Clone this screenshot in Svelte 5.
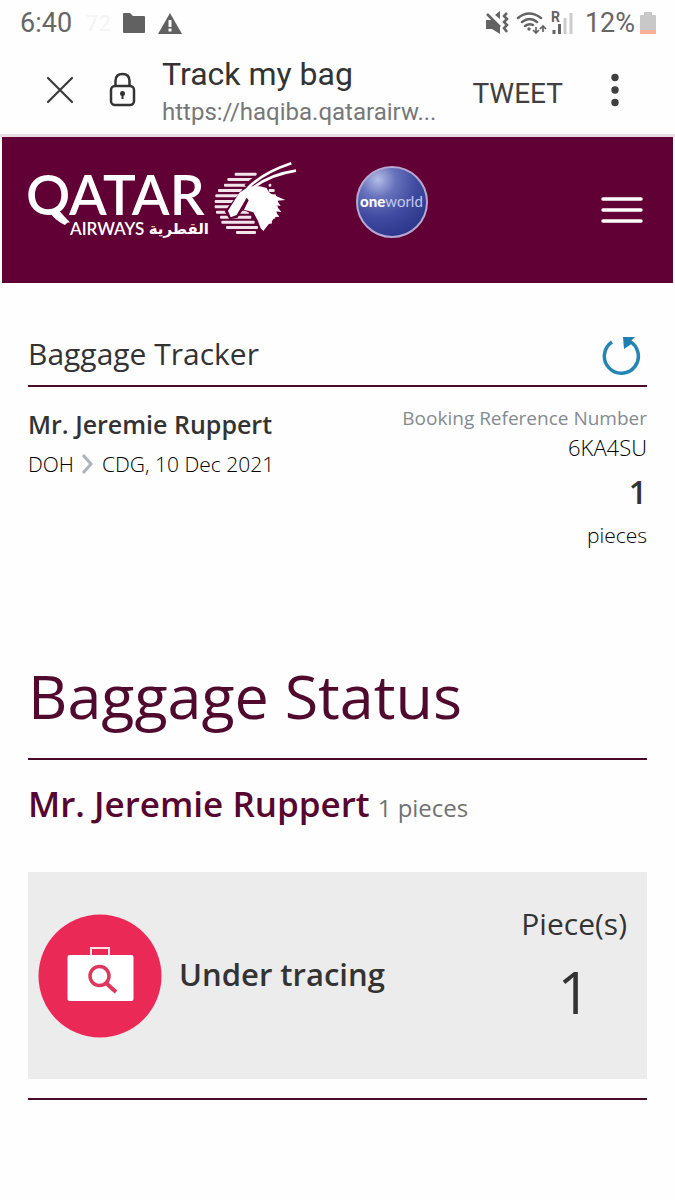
<script>
  const passenger = 'Mr. Jeremie Ruppert';
  const reference = '6KA4SU';
  const pieces = 1;
  const stripes = [
    [80, 44, 66], [58, 60, 84], [48, 77, 84], [30, 93, 86], [22, 109, 72], [20, 126, 60],
    [20, 142, 50], [24, 158, 100], [36, 173, 94], [40, 188, 100], [54, 204, 96], [84, 219, 60],
    [182, 77, 8], [182, 93, 18], [184, 109, 20], [190, 126, 20], [192, 142, 17], [190, 158, 16], [184, 173, 18], [178, 188, 14]
  ];
</script>

<div class="screen">
  <div class="status">
    <span class="time">6:40</span>
    <span class="ghost">72</span>
    <svg class="folder" width="24" height="20" viewBox="0 0 24 20" aria-hidden="true">
      <path d="M2 0h6l3 3h11q1 0 1 1v15q0 1-1 1H2q-1 0-1-1V1q0-1 1-1z" fill="#616161" />
    </svg>
    <svg class="alert" width="24" height="21" viewBox="0 0 24 21" aria-hidden="true">
      <path d="M12 0l12 21H0z" fill="#616161" />
      <path d="M12 7v7M12 15.500v3" stroke="#fff" stroke-width="3" />
    </svg>
    <svg class="signals" width="88" height="26" viewBox="485 9 88 26" aria-hidden="true">
      <path d="M486 19h6l8 6v8l-8-5h-6zM495 14l5-4v8z" fill="#636363" />
      <path d="M487 13l13 13" stroke="#636363" stroke-width="2.500" />
      <path d="M507 12l-3 3 3 3-3 3 3 3-3 3 3 4" fill="none" stroke="#636363" stroke-width="2.500" />
      <g fill="none" stroke="#636363" stroke-width="2.500" stroke-linecap="round">
        <path d="M518 17q11-9 23 0M522 21q8-6 15 0M525 25q4-3 8-1" />
      </g>
      <circle cx="529" cy="28" r="1.700" fill="#636363" />
      <path d="M536 26v6m-3-3l3 3 3-3M543 31v-6m-3 3l3-3 3 3" fill="none" stroke="#636363" stroke-width="1.700" />
      <text x="551" y="21" class="roam">R</text>
      <path d="M554 29v4M559.500 23v10" stroke="#636363" stroke-width="3" />
      <path d="M565 17v16M571 12v21" stroke="#ccc" stroke-width="3" />
    </svg>
    <span class="percent">12%</span>
    <svg width="16" height="24" viewBox="0 0 16 24" aria-hidden="true">
      <path d="M4 1h8v3h3q1 0 1 1v18H0V5q0-1 1-1h3z" fill="#c8c8c8" />
      <path d="M0 19h16v4H0z" fill="#ffae96" />
    </svg>
  </div>

  <div class="browser">
    <button class="close" aria-label="Close">
      <svg width="30" height="30" viewBox="0 0 30 30"><path d="M3 3l24 24M27 3L3 27" stroke="#3a3a3a" stroke-width="2.200" stroke-linecap="round" /></svg>
    </button>
    <svg class="lock" width="28" height="36" viewBox="0 0 28 36" aria-hidden="true">
      <rect x="3" y="14" width="23" height="19" rx="4" fill="none" stroke="#333" stroke-width="2.500" />
      <path d="M7.500 14V9q0-7 7-7t7 7v5" fill="none" stroke="#333" stroke-width="2.500" />
      <circle cx="14.500" cy="21.500" r="2.500" fill="#333" />
      <path d="M14.500 21v6" stroke="#333" stroke-width="2" />
    </svg>
    <div class="address">
      <div class="title">Track my bag</div>
      <div class="url">https://haqiba.qatarairw...</div>
    </div>
    <button class="tweet">TWEET</button>
    <button class="more" aria-label="More options">
      <svg width="10" height="34" viewBox="0 0 10 34"><g fill="#3f3f3f"><circle cx="5" cy="4.500" r="3.700" /><circle cx="5" cy="17" r="3.700" /><circle cx="5" cy="29.500" r="3.700" /></g></svg>
    </button>
  </div>

  <header>
    <svg class="qatar" width="270" height="80" viewBox="27 160 270 80" role="img" aria-label="Qatar Airways">
      <text x="26" y="215" class="brand">QATAR</text>
      <path d="M50 213q6 8 15 12l4-4q-7-2-11-8z" fill="#fff" />
      <text x="70" y="235" class="airways">AIRWAYS</text>
      <text x="209" y="234" class="arabic">القطرية</text>
      <svg x="208" y="158" width="92" height="82" viewBox="0 0 276 246">
        {#each stripes as [x, y, w]}
          <rect {x} {y} width={w} height="9" rx="3" fill="#f3e4ec" />
        {/each}
        <path d="M118 90Q170 40 262 18" fill="none" stroke="#610035" stroke-width="26" />
        <path d="M108 88L50 160l14 24 24-4 30-44-6 22 34 18 20 40 40-70-24-44z" fill="#610035" />
        <path d="M122 86L94 104 60 158l8 20 18-7 30-52 6 8-14 28 28 8 14 26 8 22 8 8 16-20 12-12 6-10 14-1-12-16 18 2-16-20 14 2-10-16 24-2-28-12q-22-6-28-24-16-6-34-6z" fill="#fff" />
        <path d="M116 94Q160 46 250 16M132 92Q184 50 264 38" fill="none" stroke="#fff" stroke-width="8" />
      </svg>
    </svg>
    <svg class="oneworld" width="74" height="74" viewBox="0 0 74 74" role="img" aria-label="oneworld">
      <defs>
        <radialGradient id="globe" cx="30%" cy="18%" r="85%">
          <stop offset="0" stop-color="#b4bde7" />
          <stop offset=".3" stop-color="#6672bb" />
          <stop offset=".65" stop-color="#3f4aa0" />
          <stop offset="1" stop-color="#2c388c" />
        </radialGradient>
      </defs>
      <circle cx="37" cy="37" r="35" fill="url(#globe)" stroke="#b9a7d2" stroke-width="2" />
      <text x="5" y="42" class="world"><tspan class="one">one</tspan>world</text>
    </svg>
    <button class="menu" aria-label="Menu">
      <svg width="42" height="28" viewBox="0 0 42 28"><path d="M2 3h38M2 14h38M2 25h38" stroke="#fff" stroke-width="3.500" stroke-linecap="round" /></svg>
    </button>
  </header>

  <main>
    <div class="heading">
      <h1>Baggage Tracker</h1>
      <button aria-label="Refresh">
        <svg width="42" height="42" viewBox="0 0 42 42">
          <path d="M13 7a17 17 0 1 0 17-1" fill="none" stroke="#2585b5" stroke-width="3.500" />
          <path d="M24 2h12l-4 4 2 2-9 6z" fill="#1e7fb0" />
        </svg>
      </button>
    </div>

    <section class="trip">
      <div>
        <h2>{passenger}</h2>
        <p class="route">
          DOH
          <svg width="14" height="22" viewBox="0 0 14 22" aria-label="to"><path d="M2 2l8 9-8 9" fill="none" stroke="#adb3b8" stroke-width="3" /></svg>
          CDG, 10 Dec 2021
        </p>
      </div>
      <div class="booking">
        <p class="label">Booking Reference Number</p>
        <p class="code">{reference}</p>
        <p class="count">{pieces}</p>
        <p class="unit">pieces</p>
      </div>
    </section>

    <h2 class="section-title">Baggage Status</h2>
    <p class="owner"><strong>{passenger}</strong><span>{pieces} pieces</span></p>

    <section class="card">
      <svg width="124" height="124" viewBox="0 0 124 124" aria-hidden="true">
        <circle cx="62" cy="62" r="61.500" fill="#ea2956" />
        <path d="M53 43V34h18v9" fill="none" stroke="#ffe0e7" stroke-width="2" />
        <rect x="29.500" y="41" width="66" height="46" rx="2" fill="#fff" />
        <circle cx="61.500" cy="62" r="9.500" fill="none" stroke="#df365d" stroke-width="3.500" />
        <path d="M68 69l10 9" stroke="#df365d" stroke-width="4" />
      </svg>
      <h3>Under tracing</h3>
      <div class="tally"><span>Piece(s)</span><b>{pieces}</b></div>
    </section>
  </main>
</div>

<style>
  :global(body) { margin: 0; background: #fefefe; }
  .screen { font-family: "Open Sans", sans-serif; color: #333; }
  h1, h2, h3, p { margin: 0; font-weight: 400; }
  svg { display: block; flex: none; }
  button { border: 0; padding: 0; background: none; font: inherit; color: inherit; cursor: pointer; }

  .status { display: flex; align-items: center; height: 46px; padding: 0 19px 0 20px; font-family: Roboto, sans-serif; color: #666; }
  .time, .percent { font-size: 27px; line-height: 32px; }
  .ghost { margin-left: 14px; font-size: 22px; color: #f4f4f4; }
  .folder { margin-left: 11px; }
  .alert { margin-left: 12px; }
  .signals { margin-left: auto; }
  .percent { margin: 0 5px 0 12px; }
  .roam { font: 700 14px Roboto, sans-serif; fill: #636363; }

  .browser { display: flex; align-items: center; height: 88px; padding: 0 55px 0 45px; border-bottom: 3px solid #e7dfe4; font-family: Roboto, sans-serif; }
  .lock { margin-left: 33px; }
  .address { flex: 1; min-width: 0; margin-left: 26px; padding-top: 5px; }
  .title { font-size: 32px; line-height: 38px; white-space: nowrap; }
  .url { font-size: 24px; line-height: 38px; color: #777; white-space: nowrap; }
  .tweet { margin-right: 47px; padding-top: 6px; font-size: 28px; color: #404040; }

  header { display: flex; align-items: flex-start; height: 120px; margin: 0 2px; padding: 26px 30px 0 25px; background: #610035; }
  .qatar { margin-top: -3px; }
  .oneworld { margin: 2px 0 0 58px; }
  .menu { margin: 33px 0 0 auto; }
  .brand { font: 600 55px Lato, sans-serif; fill: #fff; }
  .airways { font: 600 17px Lato, sans-serif; fill: #fff; }
  .arabic { font: 700 15px "DejaVu Sans", sans-serif; fill: #fff; text-anchor: end; }
  .world { font: 400 15px Lato, sans-serif; fill: #c3c9ea; }
  .one { font-weight: 900; fill: #fff; }

  main { padding: 48px 28px 40px; }
  .heading { display: flex; align-items: center; justify-content: space-between; height: 54px; border-bottom: 2px solid #4a0a2c; }
  h1 { padding-bottom: 9px; font-size: 30px; line-height: 40px; }
  .heading button { margin-right: 6px; padding-bottom: 4px; }
  .trip { display: flex; justify-content: space-between; padding-top: 15px; }
  .trip h2 { font-size: 25px; line-height: 44px; font-weight: 600; }
  .route { display: flex; align-items: center; gap: 7px; font-size: 21px; line-height: 36px; font-weight: 300; color: #000; }
  .booking { padding-top: 2px; text-align: right; }
  .label { font-size: 19px; line-height: 28px; color: #858a90; }
  .code { font-size: 22px; line-height: 30px; font-weight: 300; color: #000; }
  .count { font-size: 32px; line-height: 60px; font-weight: 600; }
  .unit { font-size: 21px; line-height: 26px; font-weight: 300; color: #000; }

  .section-title { margin-top: 100px; padding-bottom: 14px; border-bottom: 2px solid #4a0a2c; font-size: 61px; line-height: 96px; color: #4f0a2e; }
  .owner { display: flex; align-items: baseline; gap: 8px; margin-top: 16px; color: #717171; font-size: 24px; line-height: 56px; }
  .owner strong { font-size: 35px; font-weight: 600; color: #570630; }
  .card { display: flex; align-items: center; height: 207px; margin-top: 36px; padding: 0 20px 0 10px; background: #ececec; }
  .card h3 { margin-left: 17px; padding-bottom: 4px; font-size: 31px; font-weight: 600; }
  .tally { display: flex; flex-direction: column; align-items: center; margin-left: auto; padding-bottom: 16px; font-size: 30px; line-height: 48px; }
  .tally b { font-size: 58px; line-height: 88px; font-weight: 400; }
  main::after { content: ""; display: block; margin-top: 19px; border-top: 2px solid #4a0a2c; }
</style>
